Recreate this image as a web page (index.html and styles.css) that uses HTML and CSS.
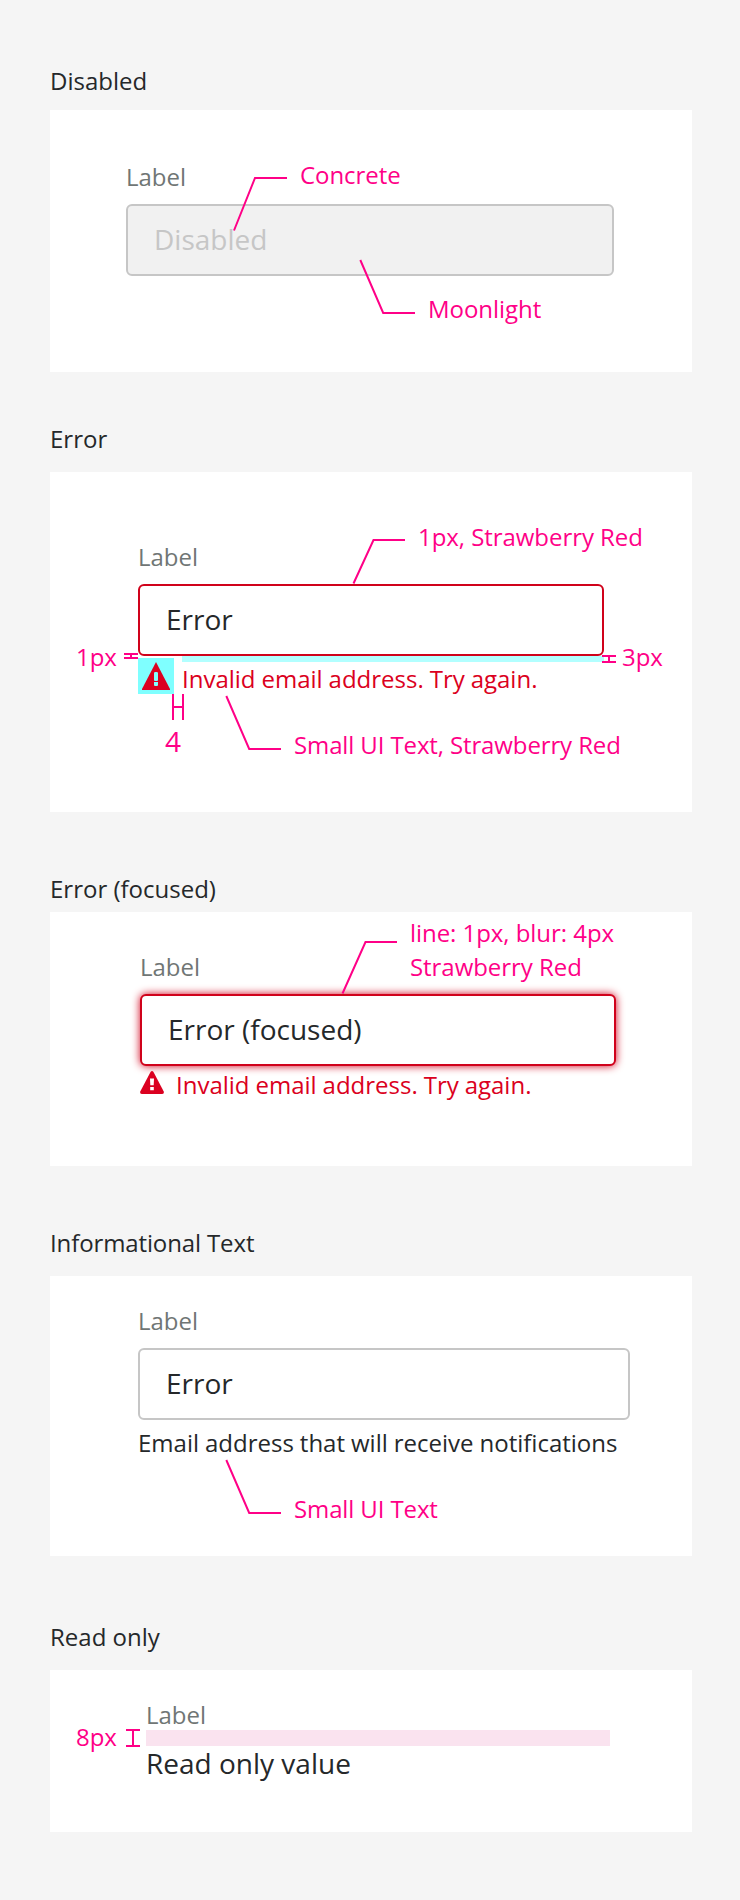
FILE: index.html
```html
<!DOCTYPE html>
<html lang="en">
<head>
<meta charset="utf-8">
<title>Input states</title>
<link rel="stylesheet" href="styles.css">
</head>
<body>
<main class="page">
  <section class="state state-disabled">
    <h2 class="title">Disabled</h2>
    <div class="card">
      <div class="field">
        <label class="label">Label</label>
        <div class="input input-disabled">Disabled</div>
      </div>
      <div class="callout concrete">
        <svg class="leader" width="56" height="56" viewBox="0 0 56 56"><path d="M2 54.5 23 2H55"/></svg>
        <span class="note">Concrete</span>
      </div>
      <div class="callout callout-low moonlight">
        <svg class="leader" width="58" height="56" viewBox="0 0 58 56"><path d="M2.3 1 25.2 54H57"/></svg>
        <span class="note">Moonlight</span>
      </div>
    </div>
  </section>

  <section class="state state-error">
    <h2 class="title">Error</h2>
    <div class="card">
      <div class="field">
        <label class="label">Label</label>
        <div class="input input-error">Error</div>
        <div class="message">
          <span class="icon-box">
            <svg width="28" height="28" viewBox="0 0 28 28"><path class="danger" d="M14 0 28 27V28H0V27Z"/><path class="mark" d="M12 11.2q0-1.2 1.2-1.2h1.6q1.2 0 1.2 1.2V18q0 1-1 1h-2q-1 0-1-1ZM12 20h4v3q0 1-1 1h-2q-1 0-1-1Z"/></svg>
          </span>
          <span class="message-text">Invalid email address. Try again.</span>
        </div>
      </div>
      <div class="callout border-note">
        <svg class="leader" width="54" height="46" viewBox="0 0 54 46"><path d="M1.5 45.5 21.5 2H53"/></svg>
        <span class="note">1px, Strawberry Red</span>
      </div>
      <div class="callout callout-low text-note">
        <svg class="leader" width="58" height="56" viewBox="0 0 58 56"><path d="M2.3 1 25.2 54H57"/></svg>
        <span class="note tight">Small UI Text, Strawberry Red</span>
      </div>
      <div class="measure one-px">
        <span class="note">1px</span>
        <svg width="14" height="6" viewBox="0 0 14 6"><path d="M0 1H14M0 5H14M7 1V5"/></svg>
      </div>
      <div class="measure three-px">
        <svg width="14" height="8" viewBox="0 0 14 8"><path d="M0 1H14M0 7H14M7 1V7"/></svg>
        <span class="note">3px</span>
      </div>
      <div class="measure-gap">
        <svg width="12" height="26" viewBox="0 0 12 26"><path d="M1 0V26M11 0V26M1 13H11"/></svg>
        <span class="gap-value">4</span>
      </div>
    </div>
  </section>

  <section class="state state-focused">
    <h2 class="title">Error (focused)</h2>
    <div class="card">
      <div class="field">
        <label class="label">Label</label>
        <div class="input input-error input-focused">Error (focused)</div>
        <div class="message">
          <svg class="icon-small" width="24" height="23" viewBox="0 0 24 23"><path class="danger" d="M10.5 1Q12-1 13.5 1L23.6 20.3Q24.6 23 22 23H2Q-.6 23 .4 20.3Z"/><path class="hole" d="M10 7.5h4l-.3 6.7h-3.4ZM10.2 16h3.6v3.3h-3.6Z"/></svg>
          <span class="message-text">Invalid email address. Try again.</span>
        </div>
      </div>
      <div class="callout blur-note">
        <svg class="leader" width="57" height="54" viewBox="0 0 57 54"><path d="M1.5 53.5 24.5 2H56"/></svg>
        <span class="note">line: 1px, blur: 4px<br>Strawberry Red</span>
      </div>
    </div>
  </section>

  <section class="state state-info">
    <h2 class="title tight">Informational Text</h2>
    <div class="card">
      <div class="field">
        <label class="label">Label</label>
        <div class="input">Error</div>
        <p class="hint">Email address that will receive notifications</p>
      </div>
      <div class="callout callout-low hint-note">
        <svg class="leader" width="58" height="56" viewBox="0 0 58 56"><path d="M2.3 1 25.2 54H57"/></svg>
        <span class="note tight">Small UI Text</span>
      </div>
    </div>
  </section>

  <section class="state state-readonly">
    <h2 class="title">Read only</h2>
    <div class="card">
      <div class="field">
        <label class="label">Label</label>
        <div class="spacer"></div>
        <div class="value">Read only value</div>
      </div>
      <div class="measure eight-px">
        <span class="note">8px</span>
        <svg width="14" height="18" viewBox="0 0 14 18"><path d="M0 1H14M0 17H14M7 1V17"/></svg>
      </div>
    </div>
  </section>
</main>
</body>
</html>
```

FILE: styles.css
```css
* { box-sizing: border-box; }

body {
  margin: 0;
  background: #f5f5f5;
  color: #25282a;
  font: 24px/32px "Open Sans", sans-serif;
}

svg { display: block; flex: none; overflow: visible; }

.page { height: 1900px; padding: 65px 48px 0 50px; }

.title { margin: 0; font-size: 24px; font-weight: 400; line-height: 32px; }

.card { position: relative; background: #fff; }

.field { display: flex; flex-direction: column; }

.label { color: #707675; }

.input {
  height: 72px;
  padding: 0 26px;
  border: 2px solid #c6c6c6;
  border-radius: 6px;
  background: #fff;
  font-size: 28px;
  line-height: 66px;
}

.input-disabled { background: #f1f1f1; color: #c6c6c6; }
.input-error { border-color: #d0021b; }
.input-focused { box-shadow: 0 0 8px #d0021b; }

.message { display: flex; color: #db0020; word-spacing: -0.3px; }
.danger { fill: #db0020; }
.mark { fill: #7fffff; }
.hole { fill: #fff; }

/* Card geometry per state */
.state-disabled .title { margin-bottom: 13px; }
.state-disabled .card { height: 262px; padding: 51px 78px 0 76px; }
.state-disabled .label { margin-bottom: 11px; }

.state-error { margin-top: 51px; }
.state-error .title { margin-bottom: 17px; }
.state-error .card { height: 340px; padding: 69px 88px 0; }
.state-error .label { margin-bottom: 11px; }
.state-error .message { gap: 8px; }
.state-error .message-text { flex: 1; height: 38px; border-top: 6px solid #b2ffff; line-height: 34px; }

.icon-box {
  display: flex;
  align-items: center;
  justify-content: center;
  width: 36px;
  height: 36px;
  margin-top: 2px;
  background: #7fffff;
}

.state-focused { margin-top: 61px; }
.state-focused .title { margin-bottom: 7px; }
.state-focused .card { height: 254px; padding: 39px 76px 0 90px; }
.state-focused .label { margin-bottom: 11px; }
.state-focused .message { gap: 12px; padding-top: 3px; }
.icon-small { margin-top: 2px; }

.state-info { margin-top: 61px; }
.state-info .title { margin-bottom: 17px; }
.state-info .card { height: 280px; padding: 29px 62px 0 88px; }
.state-info .label { margin-bottom: 11px; }
.hint { margin: 7px 0 0; white-space: nowrap; word-spacing: -0.25px; }

.state-readonly { margin-top: 65px; }
.state-readonly .title { margin-bottom: 17px; }
.state-readonly .card { height: 162px; padding: 29px 82px 0 96px; }
.state-readonly .label { margin-bottom: -1px; }
.spacer { height: 16px; background: #fae3ef; }
.value { font-size: 28px; line-height: 34px; }

/* Annotations drawn over the cards */
.note, .gap-value { color: #ff0087; white-space: nowrap; letter-spacing: -0.05px; }
.tight { letter-spacing: -0.12px; }
.leader path, .measure path, .measure-gap path { fill: none; stroke: #ff0087; stroke-width: 2; }

.callout { position: absolute; display: flex; align-items: flex-start; gap: 12px; }
.callout-low { align-items: flex-end; }

.concrete { left: 182px; top: 66px; }
.concrete .note { margin-top: -17px; }
.moonlight { left: 308px; top: 149px; }
.moonlight .note { margin-bottom: -10px; }
.border-note { left: 302px; top: 66px; }
.border-note .note { margin-top: -17px; }
.text-note { left: 174px; top: 223px; }
.text-note .note { margin-bottom: -10px; }
.blur-note { left: 291px; top: 28px; }
.blur-note .note { margin-top: -24px; line-height: 34px; }
.hint-note { left: 174px; top: 183px; }
.hint-note .note { margin-bottom: -10px; }

.measure { position: absolute; display: flex; align-items: flex-start; }
.one-px { left: 26px; top: 169px; gap: 7px; }
.one-px svg { margin-top: 12px; }
.three-px { left: 552px; top: 169px; gap: 6px; }
.three-px svg { margin-top: 14px; }
.eight-px { left: 26px; top: 51px; gap: 9px; }
.eight-px svg { margin-top: 8px; }

.measure-gap { position: absolute; left: 122px; top: 222px; }
.gap-value { display: block; margin: 3px 0 0 -7px; font-size: 28px; line-height: 36px; }
```
